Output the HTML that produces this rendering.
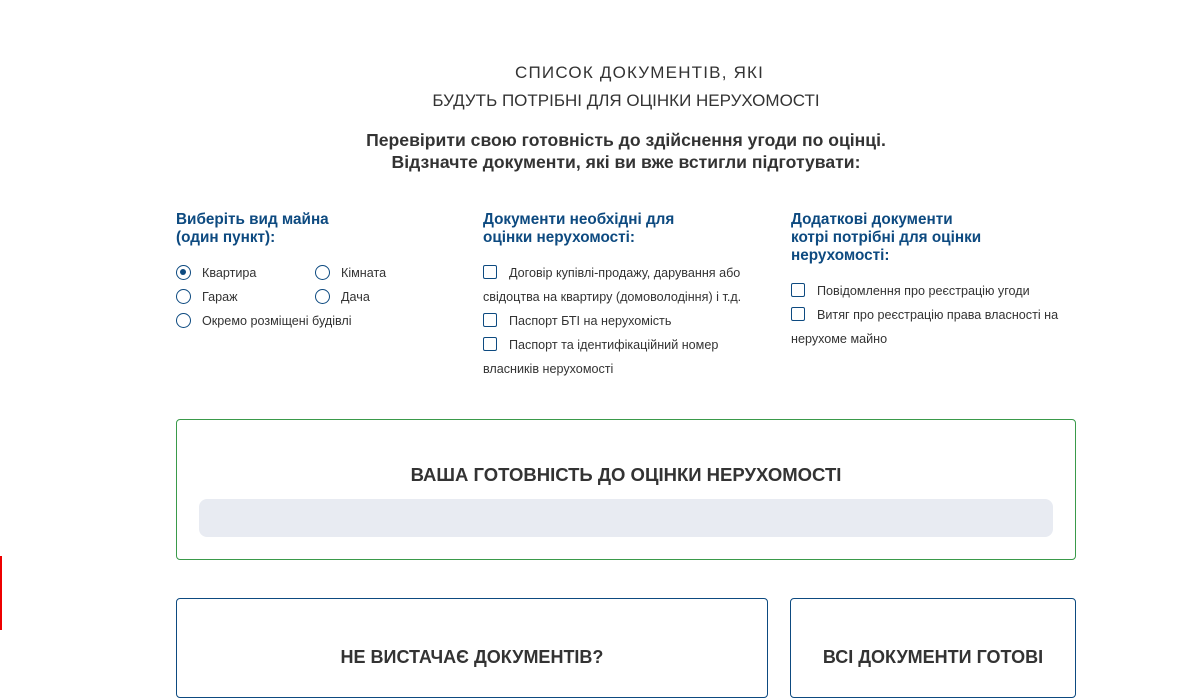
<!DOCTYPE html>
<html><head><meta charset="utf-8"><style>
*{margin:0;padding:0;box-sizing:border-box}
body{width:1181px;height:674px;overflow:hidden;background:#fff;font-family:"Liberation Sans","DejaVu Sans",sans-serif;color:#333;position:relative}
.a{position:absolute;white-space:nowrap}
.t{font-size:17px;color:#333;text-align:center;width:900px;left:176px}
.b{font-size:17.6px;font-weight:bold;color:#333;text-align:center;width:900px;left:176px}
.h{font-size:15.3px;font-weight:bold;color:#0d4a80;line-height:18px}
.s{font-size:12.6px;color:#333}
.r{width:15px;height:15px;border:1.5px solid #0d4a80;border-radius:50%}
.r.on::after{content:"";position:absolute;left:3px;top:3px;width:6px;height:6px;border-radius:50%;background:#0d4a80}
.c{width:14px;height:14px;border:1.5px solid #0d4a80;border-radius:2px}
.box{position:absolute;border-radius:4px}
</style></head><body>
<div class="a" style="left:515px;top:63px;font-size:17px;letter-spacing:1.2px">СПИСОК ДОКУМЕНТІВ, ЯКІ</div>
<div class="a t" style="top:91px">БУДУТЬ ПОТРІБНІ ДЛЯ ОЦІНКИ НЕРУХОМОСТІ</div>
<div class="a b" style="top:130px">Перевірити свою готовність до здійснення угоди по оцінці.</div>
<div class="a b" style="top:152px">Відзначте документи, які ви вже встигли підготувати:</div>

<div class="a h" style="left:176px;top:211px">Виберіть вид майна<br>(один пункт):</div>
<div class="a r on" style="left:176px;top:265px"></div><div class="a s" style="left:202px;top:266px">Квартира</div>
<div class="a r" style="left:315px;top:265px"></div><div class="a s" style="left:341px;top:266px">Кімната</div>
<div class="a r" style="left:176px;top:289px"></div><div class="a s" style="left:202px;top:290px">Гараж</div>
<div class="a r" style="left:315px;top:289px"></div><div class="a s" style="left:341px;top:290px">Дача</div>
<div class="a r" style="left:176px;top:313px"></div><div class="a s" style="left:202px;top:314px">Окремо розміщені будівлі</div>

<div class="a h" style="left:483px;top:211px">Документи необхідні для<br>оцінки нерухомості:</div>
<div class="a c" style="left:483px;top:265px"></div><div class="a s" style="left:509px;top:266px">Договір купівлі-продажу, дарування або</div>
<div class="a s" style="left:483px;top:290px">свідоцтва на квартиру (домоволодіння) і т.д.</div>
<div class="a c" style="left:483px;top:313px"></div><div class="a s" style="left:509px;top:314px">Паспорт БТІ на нерухомість</div>
<div class="a c" style="left:483px;top:337px"></div><div class="a s" style="left:509px;top:338px">Паспорт та ідентифікаційний номер</div>
<div class="a s" style="left:483px;top:362px">власників нерухомості</div>

<div class="a h" style="left:791px;top:211px">Додаткові документи<br>котрі потрібні для оцінки<br>нерухомості:</div>
<div class="a c" style="left:791px;top:283px"></div><div class="a s" style="left:817px;top:284px">Повідомлення про реєстрацію угоди</div>
<div class="a c" style="left:791px;top:307px"></div><div class="a s" style="left:817px;top:308px">Витяг про реєстрацію права власності на</div>
<div class="a s" style="left:791px;top:332px">нерухоме майно</div>

<div class="box" style="left:176px;top:419px;width:900px;height:141px;border:1px solid #3a9a4a"></div>
<div class="a" style="left:176px;width:900px;top:464px;text-align:center;font-size:18.5px;font-weight:bold;color:#333">ВАША ГОТОВНІСТЬ ДО ОЦІНКИ НЕРУХОМОСТІ</div>
<div class="box" style="left:199px;top:499px;width:854px;height:38px;background:#e8ebf2;border-radius:8px"></div>

<div class="box" style="left:176px;top:598px;width:592px;height:100px;border:1px solid #0d4a80"></div>
<div class="a" style="left:176px;width:592px;top:647px;text-align:center;font-size:18px;font-weight:bold;color:#333">НЕ ВИСТАЧАЄ ДОКУМЕНТІВ?</div>
<div class="box" style="left:790px;top:598px;width:286px;height:100px;border:1px solid #0d4a80"></div>
<div class="a" style="left:790px;width:286px;top:647px;text-align:center;font-size:18px;font-weight:bold;color:#333">ВСІ ДОКУМЕНТИ ГОТОВІ</div>

<div class="a" style="left:0;top:556px;width:2px;height:74px;background:#e00"></div>
</body></html>
